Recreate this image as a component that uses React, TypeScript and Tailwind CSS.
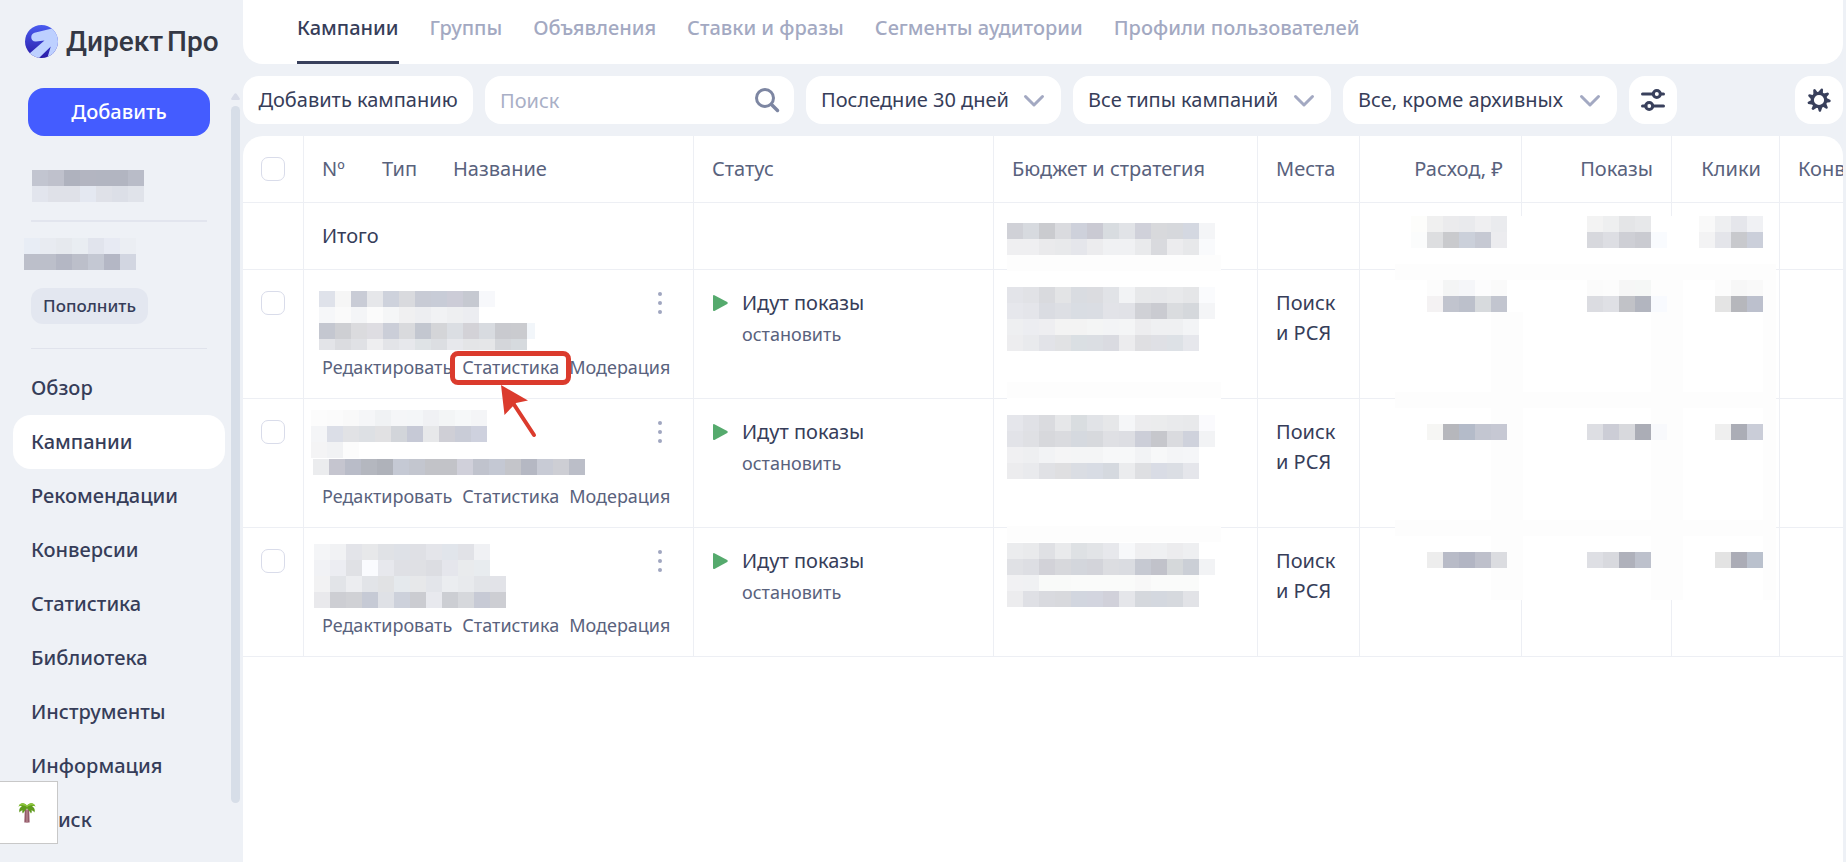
const FONT = "font-['Noto_Sans',sans-serif]";

type MosaicRow = { x?: number; y: number; h?: number; colors: string };

function Mosaic({
  width,
  height,
  rows,
  className = '',
  fill = 'none',
  covers = [],
}: {
  width: number;
  height: number;
  rows: MosaicRow[];
  className?: string;
  fill?: string;
  covers?: number[][];
}) {
  return (
    <svg
      aria-hidden="true"
      width={width}
      height={height}
      viewBox={`0 0 ${width} ${height}`}
      shapeRendering="crispEdges"
      className={`block ${className}`}
    >
      <rect width={width} height={height} fill={fill} />
      {covers.map(([x, y, w, h], i) => (
        <rect key={`c${i}`} x={x} y={y} width={w} height={h} fill="#fdfdfd" />
      ))}
      {rows.map((row, r) =>
        row.colors.split(' ').map((color, c) => (
          <rect
            key={`${r}-${c}`}
            x={(row.x ?? 0) + c * 16}
            y={row.y}
            width={16}
            height={row.h ?? 16}
            fill={`#${color}`}
          />
        )),
      )}
    </svg>
  );
}

const accountName: MosaicRow[] = [
  { y: 0, colors: 'c2c5d0 bfc1cc afb2be b3b5c1 b2b5c1 b2b5c1 b9bcc8' },
  { y: 16, colors: 'e2e5ed dfe1e8 dfe1e8 e4e8f1 dfe1e8 dcdfe7 e0e3ea' },
];
const accountBalance: MosaicRow[] = [
  { y: 0, colors: 'e8edf5 e8ebf1 e6e9ee e9edf2 e1e4ed e7eaf3 ebeef3' },
  { y: 16, colors: 'bcbfca bcbfca b4b7c4 bcbfca c4c8d3 b4b7c5 d2d6e1' },
];

const nameMosaics = [
  {
    className: 'left-[76px] top-[155px]',
    width: 216,
    height: 59,
    rows: [
      { y: 0, colors: 'dfe2ea f6f6f6 c9ccd6 e6e7ea ced2dc d9dade c8cbd5 c8ccd7 ccccd7 c6c9d1 f7f8fb' },
      { y: 16, colors: 'f6f7f9 fafafa f4f5f7 fbfbfb f5f6f7 f0f0f1 edeef1 f1f2f4 eeeff1 ecedf1' },
      { y: 32, colors: 'c4c7d0 cecfd3 dbdbde dedde2 cbced8 d9dadd c3c7d0 d4d5d8 dbdee3 d3d2d7 d8dbe0 c9cacf cacbcf f2f6fa' },
      { y: 48, h: 11, colors: 'e3e4e8 dbdce0 e0e1e5 eeeef0 e3e4e8 e7e8ec dfe3e6 dcdee2 e7e8ec e4e5e7 e5e6e8 d4d6da d6dade' },
    ],
  },
  {
    className: 'left-[68px] top-[274px]',
    width: 274,
    height: 65,
    rows: [
      { y: 0, colors: 'fcfcfc fbfbfb f9f9f9 f5f6f8 f0f2f4 f5f6f8 f4f6f8 f0f1f4 f3f5f6 f6f8f9 f4f5f7' },
      { y: 16, colors: 'f4f5f7 dbdee7 e1e2e5 dde0e4 e1e1e3 d2d5da c6c9d6 e7e8ea cfcfd6 c9ccd7 ced1de' },
      { y: 32, colors: 'f4f4f5 f1f2f4 fcfcfc' },
      { x: 2, y: 49, colors: 'ebecee c5c5cf b9bcc8 b4b7bf afb2ba c5c9d4 c3c6cf c2c3c8 c2c3c8 d0d0da c0c3cd c4c8d3 c4c5ca b5b8c3 c8cbd5 cdced4 bbbec8' },
    ],
  },
  {
    className: 'left-[71px] top-[408px]',
    width: 192,
    height: 64,
    rows: [
      { y: 0, colors: 'f4f5f7 f1f2f4 e3e4e9 e7e8ea e0e2e6 dee1e7 dfe0e5 e4e5ea e1e5eb e1e2e7 f0f1f4' },
      { y: 16, colors: 'f1f2f5 ecedf2 e0e1e5 fafbfe e7e8ed dfe0e5 dfe0e4 dcdde2 e5e6ec e9ebed e8ecef' },
      { y: 32, colors: 'f2f2f3 e2e4e8 ecedf0 e2e4e8 e1e2e4 e5e9ed e7e8ea e3e5ea ebedf0 e8eaed e2e4e8 e2e3e8' },
      { y: 48, colors: 'e9e9ec cdced3 d0d1d5 c6cad5 dfe1e6 cdd1db cbccd1 e8e9ee ccced3 d6d8dc c7cad5 cdced3' },
    ],
  },
];

const budgetRows: MosaicRow[] = [
  { y: 0, colors: 'd0d1d7 d7dadf cacbcf dadbdf ced1db cacad3 d8dce0 e1e3e7 d0d1da d8d9dc d6d8dc d4d8e1 f4f5f7' },
  { y: 16, colors: 'efeff1 efeff1 eaeaec e8e9eb e5e6eb ececee f0f1f3 f0f1f3 e9eaec d9dade ececee e7e8ea f9fafc' },
  { y: 64, colors: 'e3e4e9 e1e2e6 d9dade e3e4e6 d9dce1 dbdce0 e1e3e7 f2f3f5 e7e8ea e6e7ea e8e9eb e5e6e8 fafbfd' },
  { y: 80, colors: 'e6e7ec e4e5ea dadce2 dddfe4 d9dde3 dadde3 e2e3e8 e1e2e7 d0d1d6 cacbd1 dadcdf d5d8dc f4f5f7' },
  { y: 96, colors: 'eeeff1 ecedf1 eeeef1 f3f3f3 f3f3f3 f4f5f5 f3f4f6 f4f5f6 ededef eff0f2 eff0f2 f3f4f6' },
  { y: 112, colors: 'ededef e9eaed e2e3e8 e1e2e4 dadfe3 dbdee3 dadbe1 ececee dfdfe2 dfe0e5 dde1e6 e6e7ec' },
  { y: 192, colors: 'e5e6eb e0e1e6 dadbdf e6e7e9 d9dde0 e1e3e7 e6e7e9 f5f6f8 ececee ebeced e9eaec e8e9eb fafafd' },
  { y: 208, colors: 'e2e3e8 dfe0e4 d7d8dc dadbdf d5d9df d7d9dd dfe0e4 dddee3 ccced8 c6c7cc dadbdf cfd2dc f2f3f5' },
  { y: 224, colors: 'f0f0f2 eeeff1 f2f3f5 f5f5f6 f4f5f6 f4f5f6 f7f8f9 f7f8f9 f2f3f5 f7f8f9 f4f5f7 f5f6f8' },
  { y: 240, colors: 'ececee e9eaed e0e1e5 dfdfe1 dadde3 d8dce4 d5d9df ebecee dedfe2 d9dce5 dbdee4 e5e6eb' },
  { y: 320, colors: 'ebecee e9eaec dfe0e4 e9eaec dee1e4 e2e4e7 e7e8ec f7f8fa efeff1 eff0f2 ececee eeeff1' },
  { y: 336, colors: 'e0e1e5 dddee3 d2d2d8 d7d8dc d3d6dc d3d4da dcdde1 dadce1 c6c9d2 c1c2ca d5d8da cbcfd6 f2f3f5' },
  { y: 352, colors: 'f1f1f3 f0f1f3 f9faf9 f9faf9 fafbfa fafbfa fafbfa fafbfa f8f8f8 fafbfa fafbfa fafbfa' },
  { y: 368, colors: 'ececee dfe0e5 d9dadf d8d9dd d2d6df d3d5df d1d1da e5e6ea d5d8dd d4d8df d6d9de e2e3e7' },
];

const metricRows: MosaicRow[] = [
  { x: 16, y: 0, colors: 'fdfdfb f0f0f0 ebebed e9eaed efeff1 eaebee' },
  { x: 16, y: 16, colors: 'fbfcfc dddee0 c9cacd cbd0da c6c9d3 ececef' },
  { x: 32, y: 64, colors: 'fcfcfc f4f5f5 f5f6f9 fcfcfd fafafa' },
  { x: 32, y: 80, colors: 'f4f2f3 c1c4ce bcc0cb d7dadd c2c5cf' },
  { x: 32, y: 208, colors: 'f6f6f4 b6b7bc b4bbc9 c3c6d1 c6c8d3' },
  { x: 32, y: 336, colors: 'ededed b8bbc7 b2b5c3 bec0cb dbdce0' },
  { x: 192, y: 0, colors: 'f3f3f3 eeeff0 e4e5e7 e7e8ea' },
  { x: 192, y: 16, colors: 'd7d8dd dddee3 cecfd5 cacbd1 f9fbfe' },
  { x: 192, y: 64, colors: 'fbfbfb fcfcfc f6f6f6 f5f7f6' },
  { x: 192, y: 80, colors: 'dbdce1 dfe0e5 c1c2c7 b2b5bf f8fafe' },
  { x: 192, y: 208, colors: 'dddee3 cccdd6 d8d9dd abadb6 f8f9fc' },
  { x: 192, y: 336, colors: 'dedfe4 d8d9de afb1bb bdc1cc' },
  { x: 304, y: 0, colors: 'f9f9f9 eeeff1 e5e6eb f0f1f4' },
  { x: 304, y: 16, colors: 'f3f3f4 e4e5ea c8c9cd cbcfda' },
  { x: 320, y: 64, colors: 'fcfcfc f7f7f7 f9f9f9' },
  { x: 320, y: 80, colors: 'e4e4e4 b6b7bc bcc0cd' },
  { x: 320, y: 208, colors: 'efefef abadb6 cacdd8' },
  { x: 320, y: 336, colors: 'e3e3e3 abacb6 bac1cd' },
];

const navItems = [
  'Обзор',
  'Кампании',
  'Рекомендации',
  'Конверсии',
  'Статистика',
  'Библиотека',
  'Инструменты',
  'Информация',
  'Поиск',
];

const tabs = [
  'Кампании',
  'Группы',
  'Объявления',
  'Ставки и фразы',
  'Сегменты аудитории',
  'Профили пользователей',
];

function LogoMark() {
  return (
    <svg width="33" height="33" viewBox="0 0 33 33" aria-hidden="true">
      <defs>
        <linearGradient id="logo-blue" x1="0" y1="0" x2="0" y2="1">
          <stop offset="0" stopColor="#4a5cf0" />
          <stop offset="1" stopColor="#2a1ba6" />
        </linearGradient>
        <clipPath id="logo-clip">
          <circle cx="16.5" cy="16.5" r="16.5" />
        </clipPath>
      </defs>
      <g clipPath="url(#logo-clip)">
        <rect width="33" height="33" fill="url(#logo-blue)" />
        <path
          d="M27 3.5 9.5 7.8C4.5 9.200 5.500 17 11 16.600L19.500 15.500 4.500 28.500 8 33H14L25.800 21.500 22 34H34V6Z"
          fill="#bdd0ff"
        />
      </g>
    </svg>
  );
}

function Chevron() {
  return (
    <svg
      width="22"
      height="14"
      viewBox="0 0 22 14"
      aria-hidden="true"
      className="pointer-events-none absolute right-4 top-[18px]"
    >
      <path d="M2.500 2.500 11 11 19.500 2.500" fill="none" stroke="#a3a9c2" strokeWidth="3" strokeLinecap="round" strokeLinejoin="round" />
    </svg>
  );
}

function FilterSelect({ label, value, className }: { label: string; value: string; className: string }) {
  return (
    <div className={`relative h-12 shrink-0 ${className}`}>
      <select
        aria-label={label}
        defaultValue={value}
        className="h-12 w-full appearance-none rounded-2xl bg-white pl-[15px] pr-10 text-[20px] text-[#363d59]"
      >
        <option>{value}</option>
      </select>
      <Chevron />
    </div>
  );
}

function Gear() {
  const teeth = [0, 1, 2, 3, 4, 5, 6, 7, 8];
  return (
    <svg width="26" height="26" viewBox="-13 -13 26 26" aria-hidden="true">
      <circle r="6.700" fill="none" stroke="#39405c" strokeWidth="3.200" />
      {teeth.map((t) => (
        <path key={t} d="M-2.600 -7 -0.400 -11.500Q1.200 -12.500 1.800 -10.800L2.400 -7Z" fill="#39405c" transform={`rotate(${t * 40 + 12})`} />
      ))}
    </svg>
  );
}

function Sliders() {
  return (
    <svg width="24" height="24" viewBox="0 0 24 24" aria-hidden="true" fill="none" stroke="#39405c" strokeWidth="3" strokeLinecap="round">
      <path d="M1.500 6H12M20 6h2.500M1.500 18H5M12 18h10.500" />
      <circle cx="15.800" cy="6" r="3.500" />
      <circle cx="8.200" cy="18" r="3.500" />
    </svg>
  );
}

function Palm() {
  return (
    <svg width="18" height="21" viewBox="0 0 18 21" aria-hidden="true">
      <path d="M6.800 7.500h4.400l.4 13H6.300Z" fill="#94596a" />
      <path d="M8.200 8h1.600v12.500H8.200Z" fill="#b08088" />
      <path d="M9 4C7 .300 2 .200.600 4.500 2 3.800 3 4 3.800 4.500 1.500 5.500.600 8 1.600 10.500 2.500 9 3.500 8.500 4.500 8.200 4 9.500 4.200 10.500 5 11.500 5.800 9.500 7.500 8.500 9 6.500c1.500 2 3.200 3 4 5 .8-1 1-2 .5-3.300 1 .3 2 .8 2.900 2.300 1-2.500.1-5-2.200-6C15 4 16 3.800 17.400 4.500 16 .200 11 .300 9 4Z" fill="#5f9a1e" />
      <path d="M9 4C7 .300 2 .200.600 4.500 3.500 2.500 6.500 3 9 5.200c2.500-2.200 5.500-2.700 8.400-.7C16 .200 11 .300 9 4Z" fill="#8cc63a" />
    </svg>
  );
}

function Tick({ label }: { label: string }) {
  return (
    <input
      type="checkbox"
      aria-label={label}
      className="block size-6 appearance-none rounded-[7px] border border-[#d9dcea] bg-white checked:bg-[#445cff]"
    />
  );
}

const th = 'h-[67px] border-b border-r border-[#edeff4] px-[18px] text-left font-normal whitespace-nowrap overflow-hidden';
const td = 'border-b border-r border-[#edeff4] px-[18px] align-top whitespace-nowrap';

export default function App() {
  return (
    <div className={`${FONT} relative flex min-h-screen bg-[#eef1f6] text-[20px] text-[#363d59]`}>
      <aside className="flex w-[243px] shrink-0 flex-col">
        <div className="flex h-[88px] items-start gap-2 pl-[25px] pt-[25px]">
          <LogoMark />
          <div className="flex gap-1 font-['Roboto',sans-serif] text-[28px] leading-[34px] font-medium text-[#343845]">
            <span>Директ</span> <span>Про</span>
          </div>
        </div>
        <div className="flex grow">
          <div className="flex w-[231px] flex-col">
            <button className="ml-7 h-12 w-[182px] rounded-2xl bg-[#445cff] font-medium text-white">Добавить</button>
            <Mosaic className="mt-[34px] ml-8" width={112} height={32} rows={accountName} />
            <div className="mt-[18px] ml-[31px] h-0.5 w-44 bg-[#e2e5ee]" />
            <Mosaic className="mt-4 ml-6" width={112} height={32} rows={accountBalance} />
            <button className="mt-[18px] ml-[31px] h-9 w-[117px] rounded-xl bg-[#e3e7f0] text-[17px] font-medium">
              Пополнить
            </button>
            <div className="mt-6 ml-[31px] h-px w-44 bg-[#e0e3ec]" />
            <nav className="mt-3 flex flex-col pr-1.5 pl-[13px]">
              {navItems.map((item) => (
                <a
                  key={item}
                  href="#"
                  className={`flex h-[54px] items-center rounded-[18px] pl-[18px] font-medium ${item === 'Кампании' ? 'bg-white' : ''}`}
                >
                  {item}
                </a>
              ))}
            </nav>
          </div>
          <div className="mb-[59px] flex w-[9px] flex-col gap-1.5 pt-[5px]">
            <svg width="9" height="7" viewBox="0 0 9 7" aria-hidden="true">
              <path d="M3.200 1Q4.500-.6 5.800 1L8.800 5.500Q9 7 8 7H1Q0 7 .2 5.500Z" fill="#d8dce8" />
            </svg>
            <div className="grow rounded-full bg-[#d7dee8]" />
          </div>
        </div>
      </aside>

      <main className="flex min-w-0 grow flex-col pr-[3px]">
        <nav className="flex h-16 gap-[31px] rounded-b-[20px] bg-white pl-[54px]">
          {tabs.map((tab, i) => (
            <a
              key={tab}
              href="#"
              className={`flex h-16 items-start border-b-[3px] pt-[13px] leading-[30px] font-medium whitespace-nowrap ${
                i === 0 ? 'border-[#39405c]' : 'border-transparent text-[#a3a9c2]'
              }`}
            >
              {tab}
            </a>
          ))}
        </nav>

        <div className="flex gap-3 py-3">
          <button className="h-12 w-[230px] shrink-0 rounded-2xl bg-white whitespace-nowrap">Добавить кампанию</button>
          <div className="relative w-[309px] shrink-0">
            <input
              type="search"
              aria-label="Поиск"
              placeholder="Поиск"
              className="h-12 w-full rounded-2xl bg-white pr-12 pl-[15px] text-[20px] placeholder:text-[#a9afc6]"
            />
            <svg width="26" height="26" viewBox="0 0 26 26" aria-hidden="true" className="absolute top-[11px] right-3.5" fill="none" stroke="#7d86a2" strokeWidth="3" strokeLinecap="round">
              <circle cx="11" cy="11" r="8.500" />
              <path d="m17.500 17.500 6 6" strokeWidth="3.500" />
            </svg>
          </div>
          <FilterSelect label="Период" value="Последние 30 дней" className="w-[255px]" />
          <FilterSelect label="Тип кампаний" value="Все типы кампаний" className="w-[258px]" />
          <FilterSelect label="Состояние кампаний" value="Все, кроме архивных" className="w-[274px]" />
          <button aria-label="Фильтры" className="flex size-12 shrink-0 items-center justify-center rounded-2xl bg-white">
            <Sliders />
          </button>
          <button aria-label="Настройки" className="ml-auto flex size-12 shrink-0 items-center justify-center rounded-2xl bg-white">
            <Gear />
          </button>
        </div>

        <section className="relative grow overflow-hidden rounded-t-[20px] bg-white">
          <table className="w-full table-fixed border-separate border-spacing-0">
            <colgroup>
              <col className="w-[61px]" />
              <col className="w-[390px]" />
              <col className="w-[300px]" />
              <col className="w-[264px]" />
              <col className="w-[102px]" />
              <col className="w-[162px]" />
              <col className="w-[150px]" />
              <col className="w-[108px]" />
              <col />
            </colgroup>
            <thead className="text-[#59627d]">
              <tr>
                <th className={th}>
                  <Tick label="Выбрать все" />
                </th>
                <th className={th}>
                  <div className="flex">
                    <span className="w-[60px]">Nº</span>
                    <span className="w-[71px]">Тип</span>
                    <span>Название</span>
                  </div>
                </th>
                <th className={th}>Статус</th>
                <th className={th}>Бюджет и стратегия</th>
                <th className={th}>Места</th>
                <th className={`${th} text-right`}>Расход, ₽</th>
                <th className={`${th} text-right`}>Показы</th>
                <th className={`${th} text-right`}>Клики</th>
                <th className={`${th} border-r-0`}>Конверсии</th>
              </tr>
            </thead>
            <tbody>
              <tr>
                <td className={`${td} h-[67px]`} />
                <td className={`${td} pt-[18px] leading-[30px]`}>Итого</td>
                <td className={td} />
                <td className={td} />
                <td className={td} />
                <td className={td} />
                <td className={td} />
                <td className={td} />
                <td className={`${td} border-r-0`} />
              </tr>
              {nameMosaics.map((mosaic) => (
                <tr key={mosaic.className}>
                  <td className={`${td} h-[129px] pt-[21px]`}>
                    <Tick label="Выбрать кампанию" />
                  </td>
                  <td className={`${td} pt-[21px]`}>
                    <div className="flex flex-col">
                      <button aria-label="Действия с кампанией" className="mr-[9px] flex h-6 w-3 flex-col items-center justify-center gap-[5px] self-end">
                        <span className="size-1 rounded-full bg-[#a0a6c0]" />
                        <span className="size-1 rounded-full bg-[#a0a6c0]" />
                        <span className="size-1 rounded-full bg-[#a0a6c0]" />
                      </button>
                      <div className="mt-10 flex gap-2.5 text-[18px] leading-6 text-[#59627d]">
                        <a href="#">Редактировать</a>
                        <a href="#">Статистика</a>
                        <a href="#">Модерация</a>
                      </div>
                    </div>
                  </td>
                  <td className={`${td} pt-[18px]`}>
                    <div className="flex gap-3">
                      <svg width="18" height="30" viewBox="0 0 18 30" aria-hidden="true">
                        <path d="M1 8.200Q1 6.800 2.400 7.200L15.200 14Q16.600 15 15.200 16L2.400 23Q1 23.400 1 22Z" fill="#55aa6d" />
                      </svg>
                      <div>
                        <div className="leading-[30px]">Идут показы</div>
                        <a href="#" className="mt-1 block text-[18px] leading-6 text-[#59627d]">
                          остановить
                        </a>
                      </div>
                    </div>
                  </td>
                  <td className={td} />
                  <td className={`${td} pt-[18px] leading-[30px]`}>
                    Поиск
                    <br />и РСЯ
                  </td>
                  <td className={td} />
                  <td className={td} />
                  <td className={td} />
                  <td className={`${td} border-r-0`} />
                </tr>
              ))}
            </tbody>
          </table>

          {nameMosaics.map((mosaic) => (
            <Mosaic key={mosaic.className} {...mosaic} className={`absolute ${mosaic.className}`} />
          ))}
          <Mosaic
            className="absolute top-[87px] left-[764px]"
            width={214}
            height={384}
            rows={budgetRows}
            fill="#ffffff"
            covers={[
              [0, 32, 214, 16],
              [0, 159, 214, 16],
              [0, 303, 214, 16],
            ]}
          />
          <Mosaic
            className="absolute top-20 left-[1152px]"
            width={381}
            height={384}
            rows={metricRows}
            fill="#ffffff"
            covers={[
              [0, 48, 381, 16],
              [0, 176, 381, 16],
              [0, 304, 381, 16],
              [96, 96, 32, 288],
              [256, 48, 32, 336],
              [368, 48, 13, 336],
            ]}
          />

          <div className="pointer-events-none absolute top-[215px] left-[207px] h-[34px] w-[121px] rounded-lg border-[5px] border-[#db3b2d]" />
          <svg width="38" height="56" viewBox="0 0 38 56" aria-hidden="true" className="pointer-events-none absolute top-[248px] left-[256px]">
            <path d="M2 1 29 16.500 17 19 5.500 31Z" fill="#db3b2d" />
            <path d="M14 19 35 51" stroke="#db3b2d" strokeWidth="4" strokeLinecap="round" />
          </svg>
        </section>
      </main>

      <div className="absolute top-[781px] left-0 flex h-[63px] w-[58px] items-center border border-l-0 border-[#c8c8c8] bg-white pl-[18px]">
        <Palm />
      </div>
    </div>
  );
}
